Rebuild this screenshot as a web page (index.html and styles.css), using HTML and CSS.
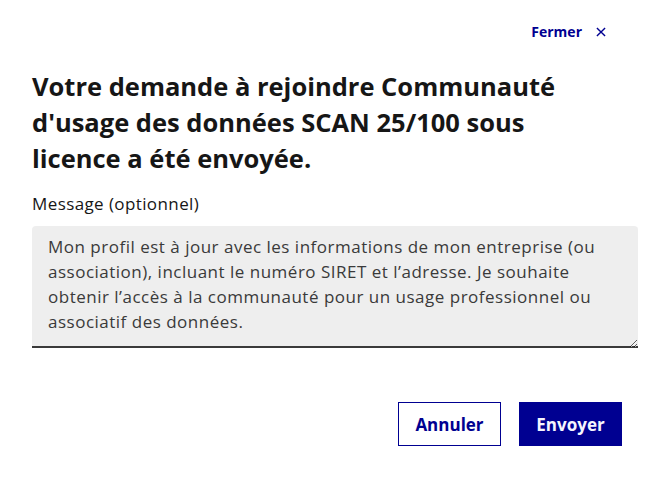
FILE: index.html
```html
<!DOCTYPE html>
<html lang="fr">
<head>
<meta charset="utf-8">
<title>Rejoindre la communauté</title>
<link rel="stylesheet" href="styles.css">
</head>
<body>
<div class="modal">
  <div class="modal-header">
    <button class="close-btn" type="button">Fermer
      <svg class="close-icon" viewBox="0 0 24 24" width="14" height="14" aria-hidden="true"><path d="M5 5 L19 19 M19 5 L5 19" stroke="#000091" stroke-width="2.4" fill="none"/></svg>
    </button>
  </div>
  <div class="modal-body">
    <h1 class="title">Votre demande à rejoindre Communauté d'usage des données SCAN 25/100 sous licence a été envoyée.</h1>
    <label class="label" for="msg">Message (optionnel)</label>
    <textarea id="msg" class="textarea">Mon profil est à jour avec les informations de mon entreprise (ou association), incluant le numéro SIRET et l’adresse. Je souhaite obtenir l’accès à la communauté pour un usage professionnel ou associatif des données.</textarea>
  </div>
  <div class="modal-footer">
    <button class="btn btn-secondary" type="button">Annuler</button>
    <button class="btn btn-primary" type="button">Envoyer</button>
  </div>
</div>
</body>
</html>
```
FILE: styles.css
```css
html, body {
  margin: 0;
  padding: 0;
  background: #ffffff;
}
body {
  font-family: "Open Sans", "Noto Sans", sans-serif;
  color: #161616;
}
.modal {
  width: 654px;
  height: 478px;
  box-sizing: border-box;
  padding: 18px 16px 0 32px;
}
.modal-header {
  display: flex;
  justify-content: flex-end;
  padding-right: 30px;
}
.close-btn {
  display: flex;
  align-items: center;
  gap: 12px;
  border: 0;
  background: transparent;
  color: #000091;
  font-family: "Open Sans", sans-serif;
  font-weight: 700;
  font-size: 14px;
  line-height: 24px;
  padding: 2px 0;
  cursor: pointer;
}
.close-icon {
  display: block;
}
.modal-body {
  padding-top: 22px;
}
.title {
  max-width: 578px;
  margin: 0 0 16px 0;
  font-size: 25.5px;
  line-height: 36px;
  font-weight: 700;
  color: #161616;
}
.label {
  display: block;
  font-size: 17px;
  letter-spacing: 0.4px;
  line-height: 24px;
  margin-bottom: 10px;
}
.textarea {
  display: block;
  width: 100%;
  height: 122px;
  box-sizing: border-box;
  margin: 0;
  padding: 8px 16px;
  border: 0;
  border-radius: 4px 4px 0 0;
  background: #eeeeee;
  box-shadow: inset 0 -2px 0 0 #3a3a3a;
  color: #3a3a3a;
  font-family: "Open Sans", sans-serif;
  font-size: 17px;
  letter-spacing: 0.5px;
  line-height: 25px;
  resize: vertical;
  outline: none;
}
.modal-footer {
  display: flex;
  justify-content: flex-end;
  gap: 18px;
  padding-top: 54px;
  padding-right: 16px;
}
.btn {
  height: 44px;
  box-sizing: border-box;
  padding: 0 16px;
  font-family: "Open Sans", sans-serif;
  font-weight: 700;
  font-size: 17px;
  border: 1px solid #000091;
  cursor: pointer;
}
.btn-secondary {
  width: 103px;
  background: #ffffff;
  color: #000091;
}
.btn-primary {
  width: 103px;
  background: #000091;
  color: #f5f5fe;
}
```
